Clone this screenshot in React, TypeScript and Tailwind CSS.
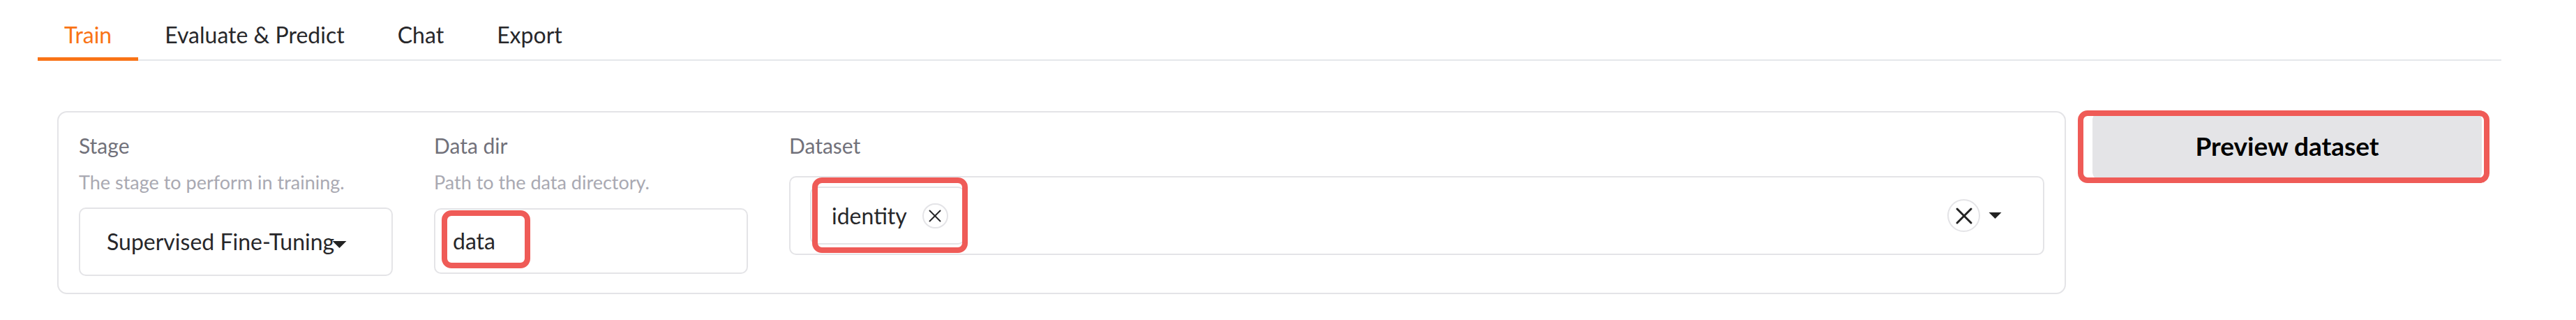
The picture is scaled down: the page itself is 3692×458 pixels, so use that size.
import { X } from "lucide-react";

const TABS = ["Train", "Evaluate & Predict", "Chat", "Export"];

function Caret({ className }: { className?: string }) {
  return (
    <svg viewBox="0 0 20 10" className={className} fill="#222">
      <path d="M0 0 L20 0 L10 10 Z" />
    </svg>
  );
}

function Label({ text, info }: { text: string; info?: string }) {
  return (
    <div>
      <div className="text-[30px] leading-[36px] text-[#71717a]">{text}</div>
      {info && (
        <div className="mt-[19px] text-[27px] leading-[32px] text-[#a9a9b2]">
          {info}
        </div>
      )}
    </div>
  );
}

export default function App() {
  const active = "Train";

  return (
    <div className="w-[3692px] h-[458px] bg-white pl-[54px] pr-[107px] [font-family:Lato,sans-serif]">
      {/* tabs */}
      <div className="flex border-b-2 border-[#e5e7eb]">
        {TABS.map((t) => (
          <div
            key={t}
            className={
              t === active
                ? "relative px-[38px] pt-[31px] pb-[16px] text-[32px] leading-[38px] text-[#f97316]"
                : "relative px-[38px] pt-[31px] pb-[16px] text-[32px] leading-[38px] text-[#27272a]"
            }
          >
            {t}
            {t === active && (
              <span className="absolute left-0 right-0 -bottom-[2px] h-[5px] bg-[#f97316]" />
            )}
          </div>
        ))}
      </div>

      <div className="mt-[72px] ml-[28px] mr-[17px] flex items-start gap-[17px]">
        {/* form panel */}
        <div className="flex-1 border-2 border-[#e4e4e7] rounded-[14px] px-[29px] pt-[29px] pb-[24px] flex gap-[59px]">
          <div className="w-[450px]">
            <Label text="Stage" info="The stage to perform in training." />
            <div className="relative mt-[20px] h-[98px] border-2 border-[#e4e4e7] rounded-[10px] pl-[38px] flex items-center">
              <span className="text-[32px] leading-[38px] text-[#27272a] whitespace-nowrap">
                Supervised Fine-Tuning
              </span>
              <Caret className="absolute left-[360px] top-[46px] w-[23px] h-[10px]" />
            </div>
          </div>

          <div className="w-[450px]">
            <Label text="Data dir" info="Path to the data directory." />
            <div className="relative mt-[21px] h-[94px] border-2 border-[#e4e4e7] rounded-[10px] pl-[25px] flex items-center">
              <span className="text-[32px] leading-[38px] text-[#27272a]">data</span>
              <div className="absolute left-[9px] top-[1px] w-[127px] h-[83px] border-[8px] border-[#ef5b57] rounded-[14px]" />
            </div>
          </div>

          <div className="flex-1">
            <Label text="Dataset" />
            <div className="relative mt-[26px] h-[113px] border-2 border-[#e4e4e7] rounded-[10px] pl-[28px] pr-[59px] flex items-center">
              <div className="h-[83px] border-2 border-[#e4e4e7] rounded-[10px] pl-[29px] pr-[22px] flex items-center gap-[22px]">
                <span className="text-[32px] leading-[38px] text-[#27272a]">identity</span>
                <span className="w-[37px] h-[36px] rounded-full border-2 border-[#e4e4e7] flex items-center justify-center">
                  <X className="w-[30px] h-[30px] text-[#27272a] shrink-0" strokeWidth={1.6} />
                </span>
              </div>
              <div className="absolute left-[31px] top-0 w-[223px] h-[108px] border-[8px] border-[#ef5b57] rounded-[14px]" />
              <span className="ml-auto w-[47px] h-[47px] rounded-full border-2 border-[#e4e4e7] flex items-center justify-center">
                <X className="w-[40px] h-[40px] text-[#222] shrink-0" strokeWidth={1.8} />
              </span>
              <Caret className="ml-[12px] w-[19px] h-[9px]" />
            </div>
          </div>
        </div>

        {/* preview button */}
        <div className="relative -mt-px w-[590px] h-[104px] pt-[2px]">
          <button className="ml-[21px] w-[558px] h-[98px] rounded-[12px] bg-[#e4e4e7] text-[37px] font-bold text-black">
            Preview dataset
          </button>
          <div className="absolute inset-0 border-[8px] border-[#ef5b57] rounded-[14px]" />
        </div>
      </div>
    </div>
  );
}
